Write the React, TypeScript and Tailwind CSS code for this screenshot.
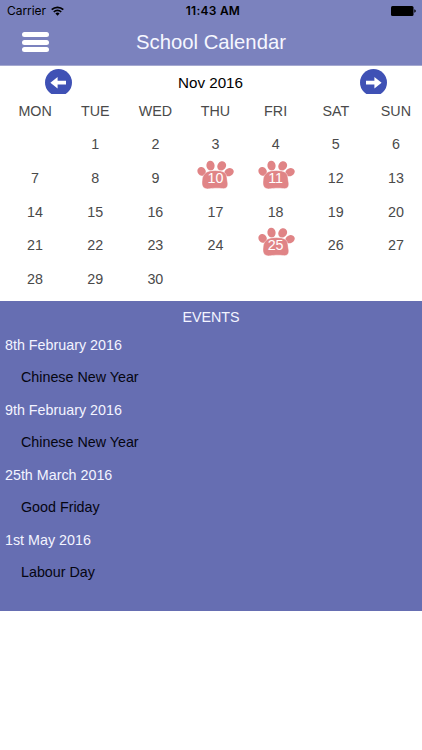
interface CalendarEvent {
  date: string
  name: string
}

const weekdays = ['MON', 'TUE', 'WED', 'THU', 'FRI', 'SAT', 'SUN']

const weeks: (number | null)[][] = [
  [null, 1, 2, 3, 4, 5, 6],
  [7, 8, 9, 10, 11, 12, 13],
  [14, 15, 16, 17, 18, 19, 20],
  [21, 22, 23, 24, 25, 26, 27],
  [28, 29, 30, null, null, null, null],
]

const markedDays = [10, 11, 25]

const events: CalendarEvent[] = [
  { date: '8th February 2016', name: 'Chinese New Year' },
  { date: '9th February 2016', name: 'Chinese New Year' },
  { date: '25th March 2016', name: 'Good Friday' },
  { date: '1st May 2016', name: 'Labour Day' },
]

function StatusBar() {
  return (
    <div className="grid grid-cols-3 items-center h-[22px] pl-[7px] pr-[6px] text-[12px] text-black font-[Inter,sans-serif]">
      <div className="flex items-center gap-[5px]">
        <span className="tracking-[-0.05px]">Carrier</span>
        <svg width="13" height="10" viewBox="0 0 13 10" fill="none" stroke="#000" strokeWidth="1.7">
          <path d="M0.7 3.7 A8.2 8.2 0 0 1 12.3 3.7" />
          <path d="M2.8 6 A5.2 5.2 0 0 1 10.2 6" />
          <path d="M6.5 9.7 L4.4 7.6 A3 3 0 0 1 8.6 7.6 Z" fill="#000" stroke="none" />
        </svg>
      </div>
      <span className="text-center font-semibold whitespace-nowrap tracking-[0.25px] pl-[3px]">11:43 AM</span>
      <svg className="justify-self-end" width="25" height="10" viewBox="0 0 25 10">
        <rect x="0" y="0" width="22.5" height="10" rx="1.5" />
        <path d="M23.3 3.3 Q24.8 3.8 24.8 5 T23.3 6.7 Z" />
      </svg>
    </div>
  )
}

function Header() {
  return (
    <header className="h-[66px] bg-[#7b82be] border-b border-[#a5a9d0]">
      <StatusBar />
      <div className="grid grid-cols-[1fr_auto_1fr] items-center h-[40px] pl-[22px]">
        <button className="flex flex-col gap-[2.5px] w-[27px]" aria-label="Menu">
          <span className="h-[5px] w-full rounded-full bg-white" />
          <span className="h-[5px] w-full rounded-full bg-white" />
          <span className="h-[5px] w-full rounded-full bg-white" />
        </button>
        <h1 className="text-[20.3px] leading-none text-[#f6f7ff] pt-px pr-[22px]">School Calendar</h1>
      </div>
    </header>
  )
}

function ArrowButton({ direction }: { direction: 'left' | 'right' }) {
  return (
    <button className="w-[27px] h-[25px] overflow-hidden" aria-label={direction === 'left' ? 'Previous month' : 'Next month'}>
      <svg width="27" height="27" viewBox="0 0 27 27" className={direction === 'right' ? '-scale-x-100' : ''}>
        <circle cx="13.5" cy="13.5" r="13.5" fill="#3f51b5" />
        <path d="M5.4 13.7 L12.6 7.9 V11.8 H21 V15.6 H12.6 V19.5 Z" fill="#fff" />
      </svg>
    </button>
  )
}

function Paw() {
  return (
    <svg className="absolute left-[12px] top-[-2.5px]" width="38" height="30" viewBox="0 0 38 30" fill="#e08486">
      <ellipse cx="4.6" cy="11.4" rx="4" ry="4.6" transform="rotate(-40 4.6 11.4)" />
      <ellipse cx="13.5" cy="5.6" rx="4.1" ry="4.9" transform="rotate(-8 13.5 5.6)" />
      <ellipse cx="24.7" cy="5.9" rx="4.2" ry="4.9" transform="rotate(35 24.7 5.9)" />
      <ellipse cx="32" cy="12.2" rx="4.9" ry="3.9" transform="rotate(-25 32 12.2)" />
      <path
        d="M9 12.6 C12.5 9.8 24 9.8 27.6 12.6 C30.4 15 29.8 19 30.6 22.5 C31.4 26.5 29.4 29 25.5 28.6 C22 28 16 28 12.5 28.8 C7.6 29.6 4.8 27 5 22.8 C5.2 18.5 5.4 15.5 9 12.6 Z"
        stroke="#fff"
        strokeOpacity="0.6"
        strokeWidth="0.7"
      />
    </svg>
  )
}

function DayCell({ day }: { day: number | null }) {
  const marked = day !== null && markedDays.includes(day)
  return (
    <div className="relative h-full flex items-center justify-center">
      {marked && <Paw />}
      <span className={marked ? 'relative text-white' : 'text-[#4a4a4a]'}>{day}</span>
    </div>
  )
}

function Calendar() {
  return (
    <section className="h-[235px]">
      <div className="flex items-start justify-between h-[28px] pt-[3px] pl-[45px] pr-[35px]">
        <ArrowButton direction="left" />
        <span className="pt-[4px] pr-[11px] text-[15.2px] leading-[20px] text-black">Nov 2016</span>
        <ArrowButton direction="right" />
      </div>
      <div className="ml-[5px] w-[421px] text-[14.3px]">
        <div className="grid grid-cols-7 h-[34px] pt-[1.5px] items-center text-center text-[#4a4a4a]">
          {weekdays.map((name) => (
            <span key={name}>{name}</span>
          ))}
        </div>
        {weeks.map((week, i) => (
          <div key={i} className="grid grid-cols-7 h-[33.7px] pt-[0.6px]">
            {week.map((day, j) => (
              <DayCell key={j} day={day} />
            ))}
          </div>
        ))}
      </div>
    </section>
  )
}

function EventList() {
  return (
    <section className="h-[310px] bg-[#666eb2] text-[14.3px]">
      <h2 className="h-[28px] pt-[6px] flex items-center justify-center text-[#f3f4ff]">EVENTS</h2>
      {events.map((event) => (
        <div key={event.date}>
          <p className="h-[32.6px] pl-[5px] flex items-center text-[#f3f4ff]">{event.date}</p>
          <p className="h-[32.6px] pb-px pl-[21px] flex items-center text-[#050510]">{event.name}</p>
        </div>
      ))}
    </section>
  )
}

export default function App() {
  return (
    <div className="w-full h-[750px] overflow-hidden bg-white font-['Liberation_Sans',sans-serif]">
      <Header />
      <Calendar />
      <EventList />
    </div>
  )
}
